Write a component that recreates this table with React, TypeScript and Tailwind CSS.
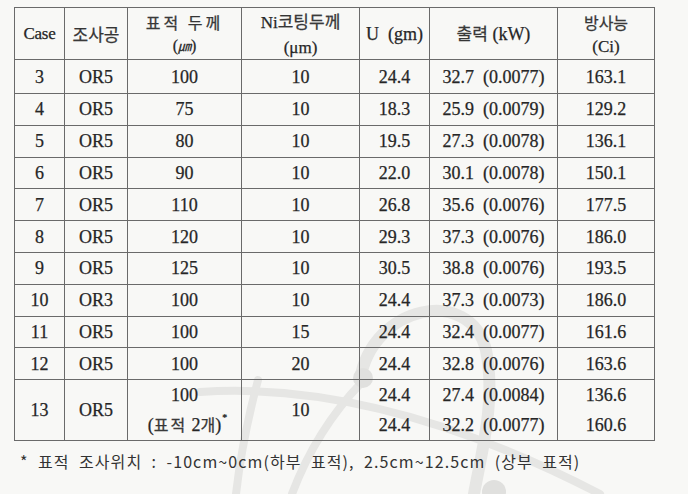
import React from "react";

const serif = { fontFamily: '"Liberation Serif", "Noto Sans CJK KR", serif' };
const kr = { fontFamily: '"Noto Sans CJK KR", sans-serif' };

type Row = { c: string; o: string; t: string; n: string; u: string; p: string; pp: string; r: string };

const rows: Row[] = [
  { c: "4", o: "OR5", t: "75", n: "10", u: "18.3", p: "25.9", pp: "0.0079", r: "129.2" },
  { c: "5", o: "OR5", t: "80", n: "10", u: "19.5", p: "27.3", pp: "0.0078", r: "136.1" },
  { c: "6", o: "OR5", t: "90", n: "10", u: "22.0", p: "30.1", pp: "0.0078", r: "150.1" },
  { c: "7", o: "OR5", t: "110", n: "10", u: "26.8", p: "35.6", pp: "0.0076", r: "177.5" },
  { c: "8", o: "OR5", t: "120", n: "10", u: "29.3", p: "37.3", pp: "0.0076", r: "186.0" },
  { c: "9", o: "OR5", t: "125", n: "10", u: "30.5", p: "38.8", pp: "0.0076", r: "193.5" },
  { c: "10", o: "OR3", t: "100", n: "10", u: "24.4", p: "37.3", pp: "0.0073", r: "186.0" },
  { c: "11", o: "OR5", t: "100", n: "15", u: "24.4", p: "32.4", pp: "0.0077", r: "161.6" },
  { c: "12", o: "OR5", t: "100", n: "20", u: "24.4", p: "32.8", pp: "0.0076", r: "163.6" },
];

const td = "border border-[#6a6a6a] text-center align-middle p-0";

function Power({ a, b }: { a: string; b: string }) {
  return (
    <span className="whitespace-pre">
      {a}
      {"  "}({b})
    </span>
  );
}

export default function App() {
  return (
    <div
      className="relative w-[688px] h-[494px] overflow-hidden bg-[#f8f8f6] text-[#262626] [-webkit-text-stroke:0.25px_#262626]"
      style={serif}
    >
      <svg className="absolute inset-0" width="688" height="494" viewBox="0 0 688 494">
        <g fill="none" stroke="#e6e6e4" strokeLinecap="round">
          <path d="M200 392 Q 380 380 600 494" strokeWidth="8" />
          <path d="M360 380 C 372 305 470 285 486 350 C 496 400 482 450 474 494" strokeWidth="12" />
          <path d="M362 382 Q 316 430 292 494" strokeWidth="8" />
          <path d="M258 380 Q 242 440 236 494" strokeWidth="8" />
        </g>
        <circle cx="363" cy="378" r="10" fill="#e0e0de" />
        <circle cx="494" cy="492" r="12" fill="#e0e0de" />
      </svg>

      <div className="relative pt-[7px] pl-[14px]">
        <table className="border-collapse table-fixed text-[18px] leading-none" style={{ width: 640 }}>
          <colgroup>
            <col style={{ width: 50 }} />
            <col style={{ width: 63 }} />
            <col style={{ width: 114 }} />
            <col style={{ width: 118 }} />
            <col style={{ width: 70 }} />
            <col style={{ width: 128 }} />
            <col style={{ width: 97 }} />
          </colgroup>
          <tbody>
            <tr className="h-[52px]">
              <td className={td + " text-[17px] tracking-[-0.3px]"}>Case</td>
              <td className={td + " text-[17px] text-[#3a3a3a]"} style={kr}>조사공</td>
              <td className={td}>
                <div className="flex flex-col items-center gap-[8px] pt-[1px]">
                  <span className="text-[16px] text-[#3a3a3a] tracking-[3px]" style={kr}>표적 두께</span>
                  <span className="text-[16px]">(<span className="italic text-[13px]">㎛</span>)</span>
                </div>
              </td>
              <td className={td}>
                <div className="flex flex-col items-center gap-[8px] pt-[1px]">
                  <span className="text-[17px]">
                    Ni<span className="text-[#3a3a3a]" style={kr}>코팅두께</span>
                  </span>
                  <span className="text-[17px]">(μm)</span>
                </div>
              </td>
              <td className={td + " whitespace-pre"}>U  (gm)</td>
              <td className={td + " whitespace-pre"}>
                <span className="text-[17px] text-[#3a3a3a]" style={kr}>출력</span> (kW)
              </td>
              <td className={td}>
                <div className="flex flex-col items-center gap-[8px] pt-[1px]">
                  <span className="text-[16px] text-[#3a3a3a]" style={kr}>방사능</span>
                  <span className="text-[17px]">(Ci)</span>
                </div>
              </td>
            </tr>
            <tr className="h-[34px]">
              <td className={td}>3</td>
              <td className={td}>OR5</td>
              <td className={td}>100</td>
              <td className={td}>10</td>
              <td className={td}>24.4</td>
              <td className={td}>
                <Power a="32.7" b="0.0077" />
              </td>
              <td className={td}>163.1</td>
            </tr>
            {rows.map((r) => (
              <tr key={r.c} className="h-[31.8px]">
                <td className={td}>{r.c}</td>
                <td className={td}>{r.o}</td>
                <td className={td}>{r.t}</td>
                <td className={td}>{r.n}</td>
                <td className={td}>{r.u}</td>
                <td className={td}>
                  <Power a={r.p} b={r.pp} />
                </td>
                <td className={td}>{r.r}</td>
              </tr>
            ))}
            <tr className="h-[61px]">
              <td className={td}>13</td>
              <td className={td}>OR5</td>
              <td className={td}>
                <div className="flex flex-col items-center gap-[12px]">
                  <span>100</span>
                  <span className="relative">
                    (<span className="text-[16px] text-[#3a3a3a] tracking-[2px]" style={kr}>표적</span> 2
                    <span className="text-[16px] text-[#3a3a3a]" style={kr}>개</span>)
                    <span className="absolute -right-[6px] -top-[3px] text-[10px]">*</span>
                  </span>
                </div>
              </td>
              <td className={td}>10</td>
              <td className={td}>
                <div className="flex flex-col items-center gap-[12px]">
                  <span>24.4</span>
                  <span>24.4</span>
                </div>
              </td>
              <td className={td}>
                <div className="flex flex-col items-center gap-[12px]">
                  <Power a="27.4" b="0.0084" />
                  <Power a="32.2" b="0.0077" />
                </div>
              </td>
              <td className={td}>
                <div className="flex flex-col items-center gap-[12px]">
                  <span>136.6</span>
                  <span>160.6</span>
                </div>
              </td>
            </tr>
          </tbody>
        </table>
        <div
          className="mt-[12px] ml-[6px] text-[16px] leading-none whitespace-pre text-[#333] tracking-[1.1px] [-webkit-text-stroke:0px]"
          style={kr}
        >
          *  표적  조사위치  :  -10cm~0cm(하부  표적),  2.5cm~12.5cm  (상부  표적)
        </div>
      </div>
    </div>
  );
}
